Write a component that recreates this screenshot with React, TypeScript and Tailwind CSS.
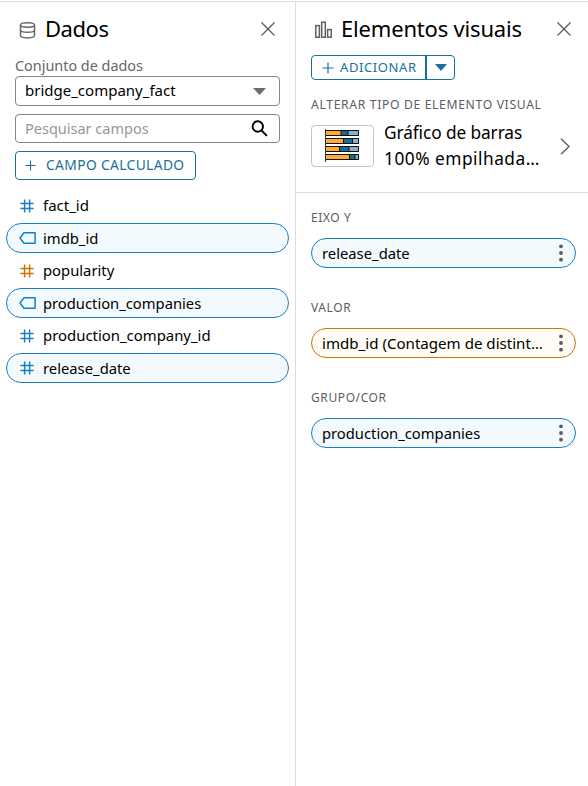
import React from "react";

const BLUE = "#1a7fbe";
const ORANGE = "#c87606";

function Close() {
  return (
    <svg width="14" height="14" viewBox="0 0 14 14" fill="none" stroke="#5f6060" strokeWidth="1.4">
      <path d="M.5.5l13 13M13.5.5l-13 13" />
    </svg>
  );
}

function Database() {
  return (
    <svg className="mt-0.5" width="17" height="17" viewBox="0 0 17 17" fill="none" stroke="#666" strokeWidth="1.5">
      <ellipse cx="8.5" cy="3" rx="7" ry="2.2" />
      <path d="M1.5 3v10.6c0 1.3 3.1 2.3 7 2.3s7-1 7-2.3V3M1.5 8c0 1.3 3.1 2.3 7 2.3s7-1 7-2.3" />
    </svg>
  );
}

function Bars() {
  return (
    <svg className="mt-0.5" width="17" height="17" viewBox="0 0 17 17" fill="none" stroke="#5f6060" strokeWidth="1.5">
      <rect x=".8" y="4.6" width="3.6" height="11.6" />
      <rect x="6.7" y="1.2" width="3.6" height="15" />
      <rect x="12.6" y="8.6" width="3.6" height="7.6" />
    </svg>
  );
}

function Plus({ size }: { size: number }) {
  return (
    <svg width={size} height={size} viewBox="0 0 12 12" fill="none" stroke="#16719b" strokeWidth="1.2">
      <path d="M6 .5v11M.5 6h11" />
    </svg>
  );
}

function Hash({ color }: { color: string }) {
  return (
    <svg width="14" height="14" viewBox="0 0 14 14" fill="none" stroke={color} strokeWidth="1.5">
      <path d="M4.6.4v13.2M9.6.4v13.2M.4 4.4h13.2M.4 9.6h13.2" />
    </svg>
  );
}

function Tag() {
  return (
    <svg width="17" height="12" viewBox="0 0 17 12" fill="none" stroke={BLUE} strokeWidth="1.5">
      <path d="M5 .8h11.1v10.4H5L1 6z" strokeLinejoin="round" />
    </svg>
  );
}

const chartRows = [
  [13, 20],
  [15.5, 24.5],
  [11.5, 21],
  [21.5, 27],
];

function ChartIcon() {
  return (
    <svg width="35" height="34" viewBox="0 0 35 34">
      {chartRows.map(([a, b], i) => (
        <g key={i} transform={`translate(1 ${1 + i * 8})`}>
          <rect x="0" y="0" width="33" height="6" fill="#ffab32" />
          <rect x={a + 2} y="0" width={b - a} height="6" fill="#146e94" />
          <rect x={b + 2} y="0" width={31 - b} height="6" fill="#86b3c9" />
          <path
            d={`M0 .5h32.5v5H0M${a + 2} 0v6M${b + 2} 0v6`}
            fill="none"
            stroke="#111"
            strokeWidth="1"
          />
        </g>
      ))}
      <path d="M.5 0v33" stroke="#333" strokeWidth="1" />
    </svg>
  );
}

type Field = { name: string; kind: "hash" | "tag"; color: string; selected: boolean; size: string };

const fields: Field[] = [
  { name: "fact_id", kind: "hash", color: BLUE, selected: false, size: "text-[15px]" },
  { name: "imdb_id", kind: "tag", color: BLUE, selected: true, size: "text-[14.8px]" },
  { name: "popularity", kind: "hash", color: ORANGE, selected: false, size: "text-[14.8px]" },
  { name: "production_companies", kind: "tag", color: BLUE, selected: true, size: "text-[14.75px]" },
  { name: "production_company_id", kind: "hash", color: BLUE, selected: false, size: "text-[14.9px]" },
  { name: "release_date", kind: "hash", color: BLUE, selected: true, size: "text-[14.8px]" },
];

function FieldRow({ field }: { field: Field }) {
  return (
    <div
      className={`flex h-[30px] items-center rounded-full border ${
        field.selected ? "border-[#1a7fbe] bg-[#f2fafe]" : "border-transparent"
      }`}
    >
      <span className="ml-[11px] flex w-[18px] justify-center">
        {field.kind === "hash" ? <Hash color={field.color} /> : <Tag />}
      </span>
      <span
        className={`ml-[7px] leading-5 whitespace-nowrap ${field.size} ${field.selected ? "" : "pb-[2px]"}`}
      >
        {field.name}
      </span>
    </div>
  );
}

function Well({ title, value, tone, size }: { title: string; value: string; tone: string; size: string }) {
  return (
    <section className="h-[90px]">
      <h3 className="h-[29px] text-[12px] leading-[18px] tracking-[0.6px] whitespace-nowrap text-[#5c5d5e]">{title}</h3>
      <div className={`flex h-[30px] w-[265px] items-center justify-between rounded-full border pl-[10px] ${tone}`}>
        <span className={`pb-px leading-5 whitespace-nowrap ${size}`}>{value}</span>
        <svg className="mr-[12px]" width="4" height="18" viewBox="0 0 4 18" fill="#5b5c5c">
          <circle cx="2" cy="2.3" r="1.9" />
          <circle cx="2" cy="9" r="1.9" />
          <circle cx="2" cy="15.7" r="1.9" />
        </svg>
      </div>
    </section>
  );
}

export default function App() {
  return (
    <main className="flex h-[786px] w-[588px] overflow-hidden bg-white pt-px font-['Noto_Sans',sans-serif] text-black">
      <aside className="w-[295px] shrink-0 border-t border-[#dcdddd]">
        <header className="flex h-[54px] items-center pr-5 pl-[19px]">
          <Database />
          <h2 className="ml-[9px] pb-0.5 text-[22px] leading-7 tracking-[-0.45px] whitespace-nowrap">Dados</h2>
          <button className="ml-auto">
            <Close />
          </button>
        </header>
        <div className="pl-[15px]">
          <label className="block h-5 text-[14.4px] leading-5 whitespace-nowrap text-[#666]">Conjunto de dados</label>
          <div className="flex h-[30px] w-[265px] items-center justify-between rounded border border-[#858686] pr-[13px] pl-[9px]">
            <span className="pb-0.5 text-[15px] leading-5 whitespace-nowrap">bridge_company_fact</span>
            <svg width="13" height="7" viewBox="0 0 13 7" fill="#6c6c6c">
              <path d="M0 0h13L6.5 7z" />
            </svg>
          </div>
          <div className="mt-2 flex h-[29px] w-[265px] items-center justify-between rounded border border-[#858686] pr-[11px] pl-[9px]">
            <span className="pb-0.5 text-[14.5px] leading-5 whitespace-nowrap text-[#979797]">Pesquisar campos</span>
            <svg width="17" height="17" viewBox="0 0 17 17" fill="none" stroke="#000" strokeWidth="1.9">
              <circle cx="6.8" cy="6.5" r="5.2" />
              <path d="M10.5 10.3l5.4 5.6" />
            </svg>
          </div>
          <button className="mt-2 flex h-[29px] w-[181px] items-center rounded border border-[#16719b] pl-[9px] text-[#16719b]">
            <Plus size={11} />
            <span className="ml-[10px] pb-0.5 text-[13.8px] leading-5 tracking-[0.37px] whitespace-nowrap">CAMPO CALCULADO</span>
          </button>
        </div>
        <div className="mt-[10.5px] flex flex-col gap-[2.5px] pr-[6px] pl-[6px]">
          {fields.map((field) => (
            <FieldRow key={field.name} field={field} />
          ))}
        </div>
      </aside>

      <aside className="w-[293px] shrink-0 border-t border-l border-[#dcdddd]">
        <header className="flex h-[53px] items-center pr-[17px] pl-[19px]">
          <Bars />
          <h2 className="ml-[9px] pb-0.5 text-[22px] leading-7 tracking-[-0.18px] whitespace-nowrap">Elementos visuais</h2>
          <button className="ml-auto">
            <Close />
          </button>
        </header>
        <div className="h-[137px] pl-[15px]">
          <div className="flex h-[25px] w-[144px] rounded border border-[#16719b] text-[#16719b]">
            <button className="flex w-[115px] items-center border-r-2 border-[#16719b] pl-[10px]">
              <Plus size={12} />
              <span className="ml-[6px] pb-0.5 text-[13px] leading-5 tracking-[0.6px] whitespace-nowrap">ADICIONAR</span>
            </button>
            <button className="flex flex-1 items-center justify-center">
              <svg width="12" height="7" viewBox="0 0 12 7" fill="#16719b">
                <path d="M0 0h12L6 7z" />
              </svg>
            </button>
          </div>
          <h3 className="mt-4 h-[18px] text-[12.2px] leading-[18px] tracking-[0.64px] whitespace-nowrap text-[#5c5d5e]">
            ALTERAR TIPO DE ELEMENTO VISUAL
          </h3>
          <div className="mt-[6px] flex h-[52px] items-center">
            <div className="flex h-[42px] w-[63px] items-center justify-center rounded border border-[#c2c3c3]">
              <ChartIcon />
            </div>
            <div className="ml-[10px] w-[166px] text-[17.3px] leading-[26px] whitespace-nowrap">
              <p className="tracking-[-0.1px]">Gráfico de barras</p>
              <p className="tracking-[0.5px]">100% empilhada…</p>
            </div>
            <svg className="ml-[10px]" width="10" height="17" viewBox="0 0 10 17" fill="none" stroke="#5f6060" strokeWidth="1.5">
              <path d="M1 .8l8 7.7-8 7.7" />
            </svg>
          </div>
        </div>
        <div className="border-t border-[#dcdddd] pt-[16px] pl-[15px]">
          <Well title="EIXO Y" value="release_date" tone="border-[#1a7fbe] bg-[#f2fafe]" size="text-[14.8px]" />
          <Well title="VALOR" value="imdb_id (Contagem de distint…" tone="border-[#c87606] bg-[#fffcf5]" size="text-[15.1px]" />
          <Well title="GRUPO/COR" value="production_companies" tone="border-[#1a7fbe] bg-[#f2fafe]" size="text-[14.75px]" />
        </div>
      </aside>
    </main>
  );
}
